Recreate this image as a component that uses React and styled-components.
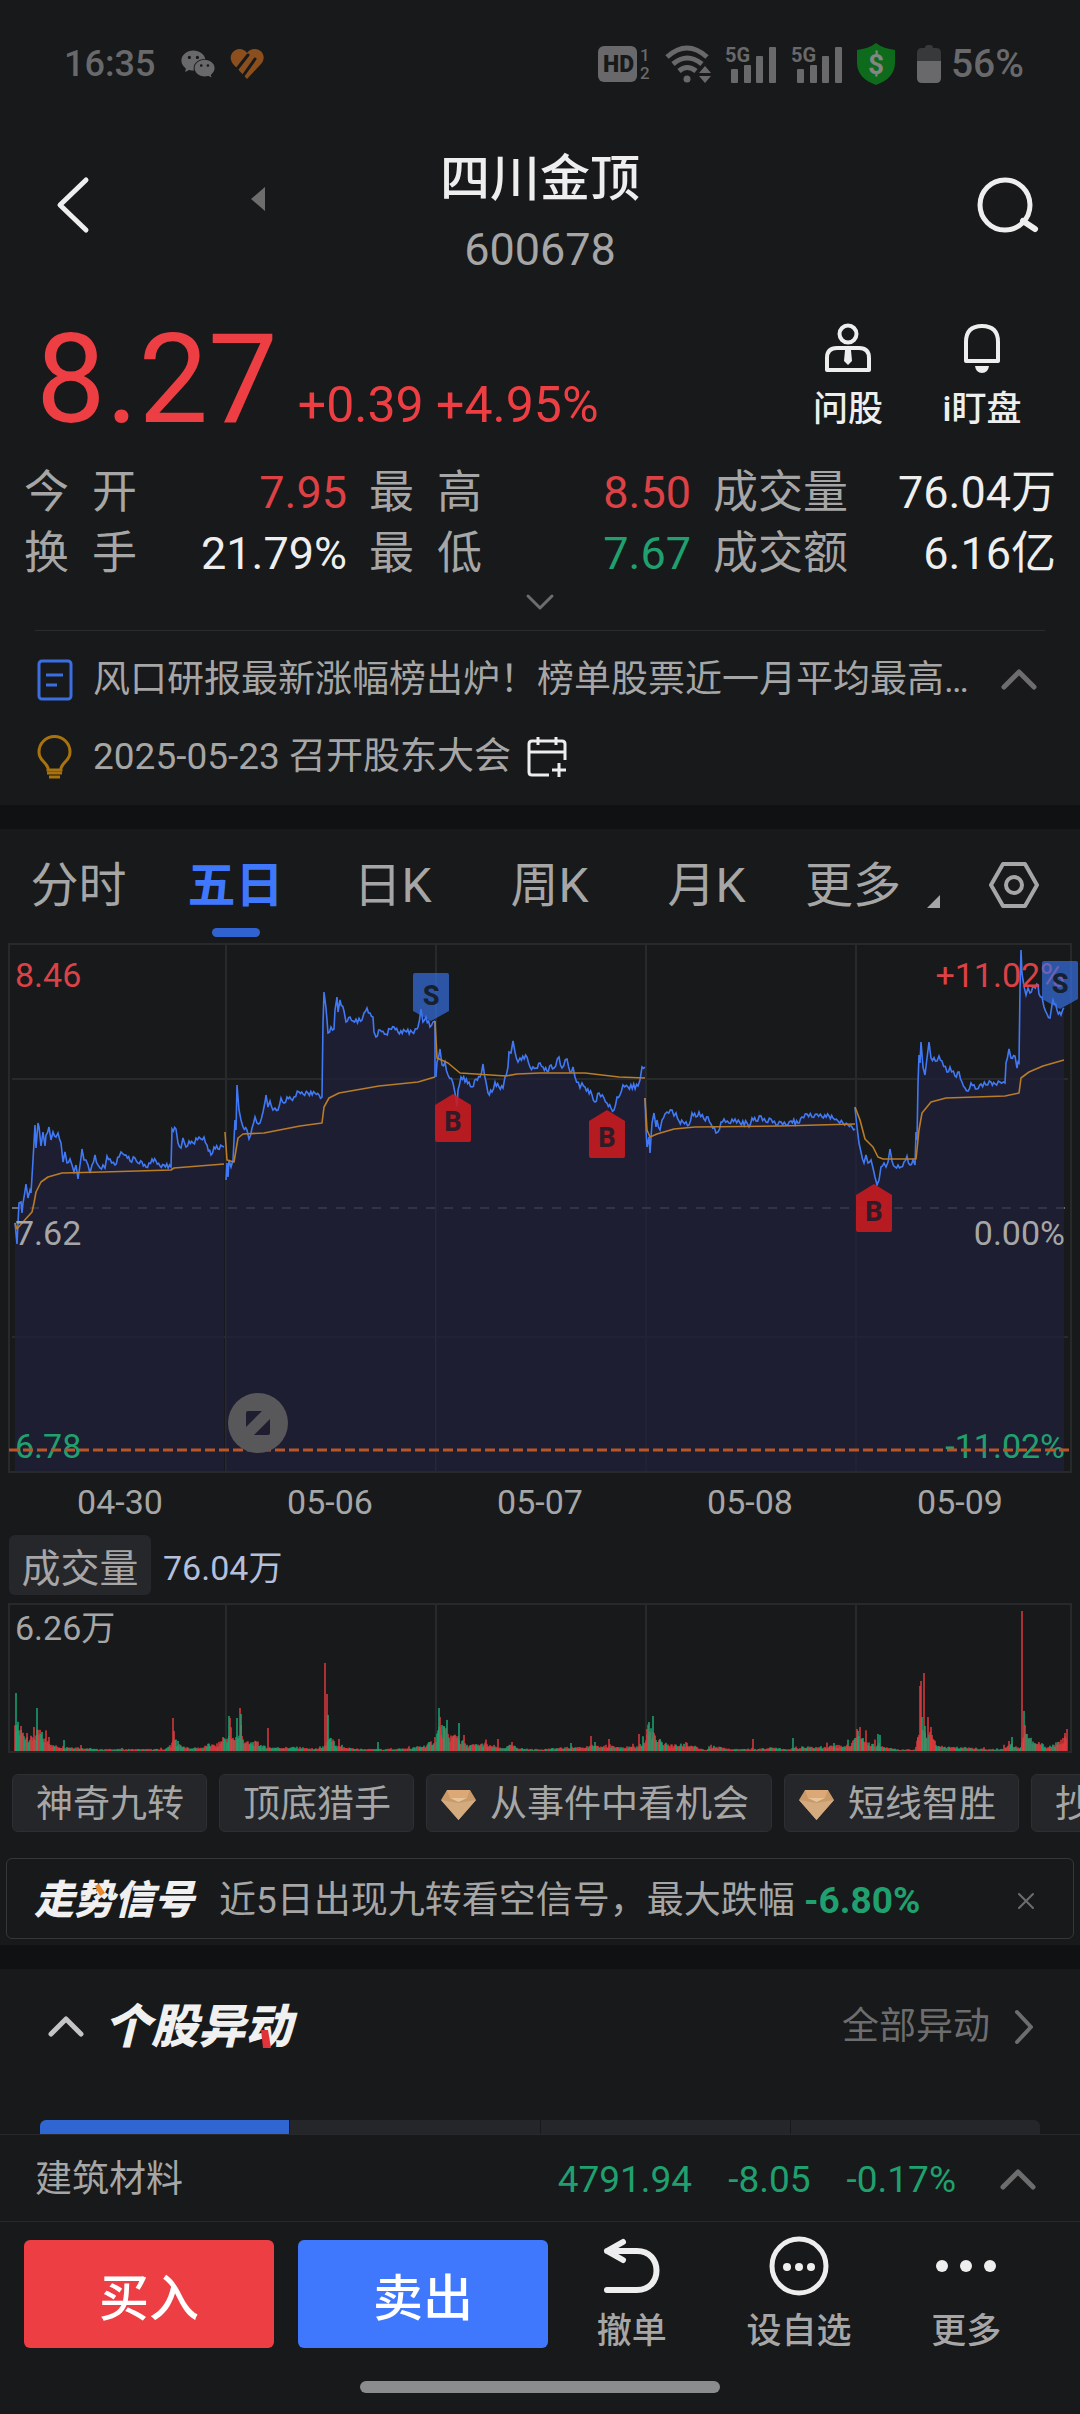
import React from 'react';
import styled, { createGlobalStyle } from 'styled-components';
import { AiFillWechat } from 'react-icons/ai';

const RED = '#ed3e43';
const GREEN = '#20a06f';
const BLUE = '#3f78fd';
const WHITE = '#eeeeee';
const GREY = '#a6a6a6';
const LINE = '#27292b';

const GlobalStyle = createGlobalStyle`
    * {
        box-sizing: border-box;
    }
    body {
        margin: 0;
        background: #17191a;
        color: ${GREY};
        font-family: Roboto, "Noto Sans CJK SC", sans-serif;
        overflow-x: hidden;
    }
    button {
        margin: 0;
        padding: 0;
        border: 0;
        background: none;
        color: inherit;
        font-family: inherit;
        cursor: pointer;
    }
    svg {
        display: block;
        flex-shrink: 0;
        overflow: visible;
    }
`

const Page = styled.main`
    display: flex;
    flex-direction: column;
    width: 100%;
`

const StatusBar = styled.header`
    display: flex;
    align-items: center;
    justify-content: space-between;
    height: 104px;
    padding: 24px 56px 0 64px;
    color: #69696b;
    font-size: 36px;
    font-weight: 500;
    line-height: 48px;
`

const StatusGroup = styled.div`
    display: flex;
    align-items: center;
    gap: ${props => props.$gap}px;
`

const Battery = styled.span`
    font-size: 39px;
`

const TopNav = styled.nav`
    display: grid;
    grid-template-columns: 1fr auto 1fr;
    align-items: start;
    padding: 44px 40px 0;
`

const NavSide = styled.div`
    display: flex;
    justify-content: ${props => (props.$end ? 'flex-end' : 'flex-start')};
    gap: 152px;
`

const NavButton = styled.button`
    display: flex;
    align-items: center;
    height: 114px;
    color: ${WHITE};
`

const PrevButton = styled(NavButton)`
    height: 102px;
    color: #6d6d6e;
`

const StockName = styled.h1`
    margin: 0 0 14px;
    color: ${WHITE};
    font-size: 50px;
    font-weight: 500;
    line-height: 62px;
    text-align: center;
`

const StockCode = styled.div`
    font-size: 45px;
    line-height: 52px;
    text-align: center;
`

const Quote = styled.section`
    display: flex;
    justify-content: space-between;
    margin-top: 40px;
    padding: 0 31px 0 36px;
`

const PriceLine = styled.div`
    display: flex;
    align-items: baseline;
    gap: 20px;
    height: 128px;
    color: ${RED};
    font-size: 50px;
    line-height: 56px;
    strong {
        font-size: 124px;
        font-weight: 400;
        line-height: 128px;
    }
`

const QuoteTools = styled.div`
    display: flex;
    padding-top: 8px;
`

const QuoteTool = styled.button`
    display: flex;
    flex-direction: column;
    align-items: center;
    gap: 14px;
    width: 134px;
    height: 108px;
    color: ${WHITE};
    font-size: 35px;
    font-weight: 500;
    line-height: 44px;
`

const Stats = styled.dl`
    display: grid;
    grid-template-columns: 323fr 322fr 343fr;
    column-gap: 22px;
    margin: 18px 24px 0;
    font-size: 45px;
    line-height: 61px;
`

const Stat = styled.div`
    display: flex;
    justify-content: space-between;
    white-space: nowrap;
    dd {
        margin: 0;
        color: ${props => props.$color};
    }
`

const ExpandButton = styled.button`
    display: flex;
    align-items: center;
    justify-content: center;
    height: 36px;
    color: #6d6d6e;
`

const News = styled.section`
    margin: 10px 35px 10px;
    padding-top: 10px;
    border-top: 1px solid #2a2c2e;
`

const NewsRow = styled.div`
    display: flex;
    align-items: center;
    height: 77px;
    font-size: 37px;
    line-height: 48px;
    a {
        margin: 0 16px 0 19px;
        color: inherit;
        text-decoration: none;
        white-space: nowrap;
    }
    button {
        display: flex;
        margin-left: ${props => (props.$push ? 'auto' : 0)};
        padding-right: ${props => (props.$push ? 8 : 0)}px;
        color: ${props => (props.$push ? '#6d6d6e' : WHITE)};
    }
`

const Gap = styled.div`
    height: 24px;
    background: #101112;
`

const Tabs = styled.nav`
    display: grid;
    grid-template-columns: repeat(6, 157fr) 138fr;
    height: 114px;
    padding-top: 27px;
`

const Tab = styled.button`
    display: flex;
    flex-direction: column;
    align-items: center;
    gap: 12px;
    color: ${props => (props.$active ? BLUE : GREY)};
    font-size: 48px;
    font-weight: ${props => (props.$active ? 700 : 400)};
    line-height: 60px;
    &::after {
        content: "";
        width: 48px;
        height: 9px;
        border-radius: 5px;
        background: ${props => (props.$active ? '#3063cf' : 'transparent')};
    }
`

const MoreTab = styled.button`
    display: flex;
    align-items: flex-end;
    justify-content: flex-end;
    gap: 26px;
    height: 60px;
    padding-right: 2px;
    font-size: 48px;
    line-height: 60px;
    white-space: nowrap;
    svg {
        margin-bottom: 8px;
    }
`

const GearButton = styled.button`
    display: flex;
    align-items: center;
    justify-content: center;
    height: 58px;
    padding-left: 6px;
`

const ChartBox = styled.section`
    position: relative;
    > svg {
        width: 100%;
        height: auto;
    }
`

const AxisLabel = styled.span`
    position: absolute;
    top: ${props => props.$top}px;
    ${props => props.$side}: 15px;
    color: ${props => props.$color};
    font-size: 34px;
    line-height: 40px;
`

const Dates = styled.div`
    display: grid;
    grid-template-columns: repeat(5, 1fr);
    padding: 0 15px;
    font-size: 34px;
    line-height: 58px;
    text-align: center;
`

const VolumeHead = styled.div`
    display: flex;
    align-items: center;
    gap: 12px;
    margin: 4px 9px 8px;
    color: #b4bfdc;
    font-size: 34px;
    button {
        width: 142px;
        height: 60px;
        border-radius: 6px;
        background: #26272b;
        color: ${GREY};
        font-size: 39px;
    }
`

const Chips = styled.div`
    display: flex;
    gap: 12px;
    margin-top: 21px;
    padding-left: 12px;
    overflow: hidden;
`

const Chip = styled.button`
    display: flex;
    flex-shrink: 0;
    align-items: center;
    gap: 14px;
    height: 58px;
    padding: 4px 22px 0 ${props => (props.$gem ? 14 : 23)}px;
    border: 1px solid #2d2f32;
    border-radius: 6px;
    background: #242629;
    font-size: 37px;
    line-height: 48px;
    white-space: nowrap;
`

const Signal = styled.section`
    display: flex;
    align-items: center;
    height: 81px;
    margin: 26px 6px 6px;
    padding: 4px 38px 0 27px;
    border: 1px solid #35373a;
    border-radius: 6px;
    font-size: 37px;
    line-height: 48px;
    white-space: nowrap;
    p {
        margin: 0 0 0 25px;
    }
    strong {
        color: ${GREEN};
        font-weight: 700;
    }
    button {
        display: flex;
        margin-left: auto;
        color: #6d6d6e;
    }
`

const Brand = styled.h2`
    position: relative;
    margin: 0;
    color: #f0f0f0;
    font-size: ${props => props.$size}px;
    font-style: italic;
    font-weight: 900;
    line-height: 56px;
    white-space: nowrap;
    svg {
        position: absolute;
        top: ${props => props.$markTop}px;
        left: ${props => props.$markLeft}px;
    }
`

const MovesHead = styled.section`
    display: flex;
    align-items: center;
    height: 114px;
    padding: 2px 46px 0 48px;
    button {
        display: flex;
        margin-right: 20px;
        color: #c4c4c4;
    }
    a {
        display: flex;
        align-items: center;
        gap: 24px;
        margin-left: auto;
        color: #6d6d6e;
        font-size: 37px;
        line-height: 48px;
        text-decoration: none;
    }
`

const Segments = styled.div`
    display: grid;
    grid-template-columns: repeat(4, 1fr);
    gap: 1px;
    height: 14px;
    margin: 37px 40px 0;
    border-radius: 6px 6px 0 0;
    overflow: hidden;
`

const Segment = styled.span`
    background: ${props => (props.$active ? '#3066d2' : '#25262a')};
`

const IndexBar = styled.section`
    display: flex;
    align-items: center;
    height: 88px;
    padding: 4px 44px 0 35px;
    border-top: 1px solid ${LINE};
    border-bottom: 1px solid ${LINE};
    font-size: 37px;
    line-height: 48px;
    span {
        margin-right: 36px;
        color: ${GREEN};
    }
    span:first-of-type {
        margin-left: auto;
    }
    button {
        display: flex;
        margin-left: 8px;
        color: #6d6d6e;
    }
`

const Actions = styled.footer`
    display: grid;
    grid-template-columns: 250fr 250fr 490fr;
    column-gap: 24px;
    align-items: center;
    padding: 14px 18px 0 24px;
`

const TradeButton = styled.button`
    height: 108px;
    border-radius: 6px;
    background: ${props => props.$color};
    color: #ffffff;
    font-size: 50px;
    font-weight: 500;
`

const ActionTools = styled.div`
    display: grid;
    grid-template-columns: repeat(3, 1fr);
    margin: 0 12px 0 -24px;
`

const ActionTool = styled.button`
    display: flex;
    flex-direction: column;
    align-items: center;
    gap: 16px;
    font-size: 35px;
    font-weight: 500;
    line-height: 40px;
    svg {
        color: ${WHITE};
    }
`

const HomeBar = styled.div`
    align-self: center;
    width: 33.333%;
    height: 12px;
    margin: 29px 0 21px;
    border-radius: 6px;
    background: #8b8c8d;
`

const Chevron = ({ width, height, d, weight = 4 }) => (
    <svg width={width} height={height} viewBox={`0 0 ${width} ${height}`} fill="none" stroke="currentColor" strokeWidth={weight} strokeLinecap="round" strokeLinejoin="round">
        <path d={d} />
    </svg>
)

const ChevronUp = () => <Chevron width={36} height={22} d="M3 18 L18 3 L33 18" weight={5} />

const SignalBars = () => (
    <svg width="52" height="38" viewBox="0 0 52 38" fill="currentColor">
        <text x="0" y="17" fontSize="20" fontWeight="700">5G</text>
        <rect x="6" y="24" width="7" height="14" rx="1" />
        <rect x="19" y="20" width="7" height="18" rx="1" />
        <rect x="31" y="11" width="7" height="27" rx="1" />
        <rect x="44" y="2" width="7" height="36" rx="1" />
    </svg>
)

const Status = () => (
    <StatusBar>
        <StatusGroup $gap={24}>
            <span>16:35</span>
            <StatusGroup $gap={13}>
                <AiFillWechat size={38} />
                <svg width="34" height="30" viewBox="0 0 34 30" fill="#8a4f1d">
                    <path d="M17 30 L3 15 C-3 7 4 0 9 0 C13 0 16 2 17 4 C18 2 21 0 25 0 C32 0 37 8 31 15 Z" />
                    <path d="M7 20 L18 6 M13 27 L25 10" stroke="#17191a" strokeWidth="3" strokeLinecap="round" />
                </svg>
            </StatusGroup>
        </StatusGroup>
        <StatusGroup $gap={14}>
            <svg width="53" height="38" viewBox="0 0 53 38" fill="currentColor">
                <rect y="1" width="39" height="36" rx="6" />
                <text x="5" y="27" fontSize="23" fontWeight="900" fill="#17191a">HD</text>
                <text x="42" y="16" fontSize="17">1</text>
                <text x="42" y="34" fontSize="17">2</text>
            </svg>
            <svg width="46" height="38" viewBox="0 0 46 38" fill="none" stroke="currentColor" strokeWidth="5">
                <path d="M2 12 Q22 -6 42 12" />
                <path d="M8 19 Q22 7 37 19" />
                <path d="M14 26 Q22 19 31 26" />
                <circle cx="22" cy="34" r="3.5" fill="currentColor" stroke="none" />
                <path d="M34 28 L40 21 L46 28 Z M34 31 L40 38 L46 31 Z" fill="currentColor" stroke="none" />
            </svg>
            <SignalBars />
            <SignalBars />
            <svg width="38" height="42" viewBox="0 0 38 42">
                <path d="M19 0 C24 4 31 6 38 7 V20 C38 31 30 38 19 42 C8 38 0 31 0 20 V7 C7 6 14 4 19 0 Z" fill="#0d6b1b" />
                <text x="19" y="31" textAnchor="middle" fontSize="28" fontWeight="700" fill="#848586">$</text>
            </svg>
            <StatusGroup $gap={10}>
                <svg width="32" height="38" viewBox="-8 0 32 38" fill="currentColor">
                    <path d="M0 16 V8 Q0 3 5 3 H8 Q8 0 11 0 H13 Q16 0 16 3 H19 Q24 3 24 8 V16 Z" fill="#38393b" />
                    <path d="M0 16 H24 V33 Q24 38 19 38 H5 Q0 38 0 33 Z" />
                </svg>
                <Battery>56%</Battery>
            </StatusGroup>
        </StatusGroup>
    </StatusBar>
)

// x / y in chart units, y grows downwards from the top border
const prices = [
    [15,280,17,301,18,280,19,260,21,259,22,270,23,260,26,241,28,255,30,247,31,250,33,217,35,182,36,205,38,180,39,184,41,203,43,189,45,203,46,192,49,184,51,197,53,189,56,194,58,190,61,200,62,209,63,219,65,209,67,220,70,216,72,222,74,229,76,222,78,236,80,222,81,215,82,206,84,217,86,217,88,222,90,230,92,222,95,212,98,222,100,225,103,222,105,225,107,213,110,216,115,222,119,214,121,209,123,211,126,212,130,218,135,215,138,220,142,219,146,224,149,220,152,216,156,218,160,223,164,222,171,224,172,186,176,186,178,200,181,205,183,195,186,204,189,198,193,200,199,194,201,196,204,194,207,202,211,212,214,204,218,206,222,203,224,204],
    [226,237,227,220,228,234,229,217,231,224,233,217,235,177,236,187,237,142,239,167,241,177,243,184,247,187,249,196,252,185,255,174,257,180,260,180,263,169,265,159,266,152,268,164,270,158,273,167,275,165,278,167,281,155,284,160,287,154,291,156,294,154,299,149,303,151,308,150,315,150,319,152,322,154,323,80,324,49,326,65,327,77,328,90,331,84,334,86,335,67,337,54,338,69,340,57,344,68,346,79,350,74,353,78,362,77,364,70,367,65,370,70,373,74,374,89,376,94,380,87,386,91,390,86,394,84,398,89,405,88,412,89,417,86,418,84,421,66,423,79,426,74,430,84,433,79,435,78],
    [436,134,437,119,440,106,442,122,445,119,448,132,453,140,455,150,457,163,458,147,461,134,469,139,472,144,476,136,480,134,483,121,486,139,488,150,492,149,495,139,499,144,503,145,505,134,508,124,509,109,511,110,513,98,515,109,518,119,520,115,527,114,530,124,536,125,540,120,543,124,547,128,551,122,554,125,559,114,562,125,567,116,570,129,573,124,575,134,580,145,582,140,585,144,592,152,595,159,599,150,604,155,607,160,611,165,614,167,617,154,620,152,623,142,628,144,638,143,640,137,642,124,645,124],
    [645,155,646,187,647,204,649,194,650,210,652,180,654,170,656,184,657,177,660,187,662,177,665,171,667,169,672,167,674,173,676,170,679,178,683,179,689,182,692,170,696,174,699,169,704,176,708,174,711,181,716,190,718,189,721,179,724,176,729,180,735,176,740,180,747,180,749,184,752,175,756,178,761,173,766,179,771,176,776,182,781,179,786,182,791,178,798,180,802,174,807,171,812,174,817,171,822,174,829,173,833,175,838,178,843,180,848,182,852,184,855,186],
    [855,165,857,184,859,200,861,209,864,220,866,212,868,220,871,217,873,225,875,234,877,242,879,237,881,224,884,220,886,224,888,219,890,206,892,218,895,224,901,224,904,219,907,213,910,222,913,217,915,222,916,189,917,197,918,140,919,112,920,120,921,99,923,124,925,132,927,115,929,99,931,115,937,118,939,113,942,118,947,129,950,124,955,133,959,129,962,139,965,145,968,148,971,140,977,146,981,141,986,142,991,139,995,141,1000,139,1005,140,1006,120,1009,106,1011,115,1015,113,1017,125,1018,119,1019,120,1020,47,1021,7,1022,30,1023,37,1026,52,1028,45,1030,50,1034,44,1038,42,1039,51,1042,54,1044,64,1047,71,1050,75,1052,62,1053,57,1057,67,1061,72,1063,66,1064,65],
]

const averages = [
    [15,280,17,286,23,279,32,269,34,260,36,249,41,239,48,234,62,230,103,229,171,227,174,225,224,221],
    [225,189,227,217,234,219,238,195,243,191,264,190,300,183,322,180,324,164,329,155,339,150,379,143,418,139,435,134],
    [435,78,437,115,448,120,460,130,506,133,517,131,540,130,585,130,619,134,645,135],
    [645,155,647,187,650,194,657,191,674,186,695,184,781,183,855,181],
    [855,164,860,177,865,196,873,204,878,214,883,216,916,216,919,187,922,170,931,159,946,155,1005,153,1019,150,1021,135,1029,129,1043,123,1064,117],
]

// x / height of the typical bar
const volumeBase = [14,26,20,22,30,14,39,22,43,14,48,12,52,6,60,5,80,4,95,2,165,2,172,10,180,5,190,3,202,4,207,7,215,6,222,13,226,16,232,14,236,17,240,18,243,13,248,8,252,10,258,8,265,4,285,4,300,4,310,2,322,3,328,13,332,12,335,5,342,4,360,2,385,2,410,3,418,5,425,6,433,12,438,26,443,24,447,18,452,16,456,20,460,10,466,6,476,7,484,8,490,5,500,3,511,6,516,4,525,2,540,2,570,4,594,5,612,5,635,4,645,12,650,25,655,12,662,9,668,6,683,7,693,6,697,3,705,1,712,5,720,4,730,2,755,2,776,4,785,2,803,4,815,4,833,6,842,6,850,7,857,20,862,13,867,11,873,7,881,6,895,2,914,1,917,14,924,24,930,18,937,5,955,4,966,4,985,2,1000,2,1010,9,1014,4,1020,4,1024,24,1029,14,1034,8,1039,9,1046,4,1050,6,1058,9,1062,13,1066,20]

const volumePeaks = [
    [15,58,0],[20,25,1],[26,18,1],[33,24,1],[36,43,0],[48,14,1],[63,11,0],[172,33,1],[173,20,1],[177,10,0],[228,35,0],[229,33,1],[236,33,0],[239,43,1],[240,37,0],
    [267,23,1],[324,88,1],[326,57,1],[327,36,0],[338,12,1],[377,9,0],[438,43,0],[439,34,1],[443,25,0],[458,28,0],[463,16,1],[497,12,1],[511,9,1],[570,8,0],[590,15,1],[594,9,0],[608,12,1],
    [638,17,1],[646,22,1],[648,29,0],[652,35,0],[653,18,1],[659,12,0],[752,12,1],[792,13,0],[833,8,0],[854,13,0],[856,22,1],[857,20,0],[862,13,0],[877,17,0],[879,16,0],
    [917,14,1],[919,65,1],[920,70,1],[921,34,0],[923,78,1],[924,25,0],[930,24,1],[1008,10,1],[1011,14,0],[1021,140,1],[1023,40,0],[1024,26,1],[1062,13,1],[1064,18,1],[1066,22,1],
]

const noise = n => {
    const v = Math.sin(n * 12.9898) * 43758.5453
    return v - Math.floor(v)
}

const toPath = values => {
    let d = `M${values[0]} ${values[1]}`
    for (let i = 2; i < values.length; i += 2) {
        d += ` L${values[i]} ${values[i + 1]}`
    }
    return d
}

// small ticks between two quotes that lie further apart
const withTicks = values => {
    const out = [values[0], values[1]]
    for (let i = 2; i < values.length; i += 2) {
        const [x0, y0, x1, y1] = values.slice(i - 2, i + 2)
        const steps = Math.floor((x1 - x0) / 1.3)
        for (let s = 1; s < steps; s++) {
            const swing = (s % 2 ? 1 : -1) * (0.6 + noise(x0 + s) * 2)
            out.push(x0 + ((x1 - x0) * s) / steps, y0 + ((y1 - y0) * s) / steps + swing)
        }
        out.push(x1, y1)
    }
    return out
}

const baseHeight = x => {
    let i = 2
    while (i < volumeBase.length - 2 && volumeBase[i] < x) i += 2
    const [x0, h0, x1, h1] = volumeBase.slice(i - 2, i + 2)
    return h0 + ((h1 - h0) * (x - x0)) / (x1 - x0)
}

const volumeBars = []
for (let x = 14; x < 1066; x++) {
    const burst = noise(x * 7) > 0.93 ? 1.6 : 1
    volumeBars.push([x, Math.max(1, baseHeight(x) * (0.5 + noise(x) * 0.6) * burst), noise(x * 3) > 0.45 ? 1 : 0])
}
volumeBars.push(...volumePeaks)

const dayLines = [226, 436, 646, 856]

const Marker = ({ x, y, side }) => (
    <g transform={`translate(${x} ${y})`}>
        <path
            d={side === 'B' ? 'M0 -48 L18 -37 V-2 Q18 0 16 0 H-16 Q-18 0 -18 -2 V-37 Z' : 'M0 0 L18 -10 V-46 Q18 -48 16 -48 H-16 Q-18 -48 -18 -46 V-10 Z'}
            fill={side === 'B' ? '#c91b21' : '#3873ea'}
            opacity={side === 'B' ? 0.9 : 0.67}
        />
        <text y={side === 'B' ? -11 : -16} textAnchor="middle" fontSize="27" fontWeight="800" fill={side === 'B' ? '#301c28' : '#16202f'}>{side}</text>
    </g>
)

const Overlay = styled.svg`
    position: absolute;
    top: 0;
    left: 0;
`

const PriceChart = () => (
    <ChartBox>
        <svg viewBox="0 0 1080 530">
            <g fill="none" stroke={LINE} strokeWidth="2">
                <rect x="9" y="1" width="1062" height="528" />
                {dayLines.map(x => <path key={x} d={`M${x} 1 V529`} />)}
                <path d="M12 136 H1068 M12 394 H1068" />
            </g>
            <path d="M12 265 H1065" stroke="#6b6d72" strokeWidth="2" strokeDasharray="9 9" />
            {prices.map(day => (
                <path key={day[0]} d={`${toPath(withTicks(day))} V528 H${day[0]} Z`} fill="#20203a" fillOpacity="0.75" />
            ))}
            {prices.map(day => (
                <path key={day[0]} d={toPath(withTicks(day))} fill="none" stroke="#4179f5" strokeWidth="1.6" />
            ))}
            <path d="M435 78 V134" stroke="#4179f5" strokeWidth="1.6" />
            {averages.map(day => (
                <path key={day[0]} d={toPath(day)} fill="none" stroke="#b97c28" strokeWidth="1.6" strokeLinejoin="round" />
            ))}
        </svg>
        <AxisLabel $side="left" $top={12} $color="#dc4146">8.46</AxisLabel>
        <AxisLabel $side="right" $top={12} $color="#dc4146">+11.02%</AxisLabel>
        <AxisLabel $side="left" $top={270} $color={GREY}>7.62</AxisLabel>
        <AxisLabel $side="right" $top={270} $color={GREY}>0.00%</AxisLabel>
        <AxisLabel $side="left" $top={483} $color={GREEN}>6.78</AxisLabel>
        <AxisLabel $side="right" $top={483} $color={GREEN}>-11.02%</AxisLabel>
        <Overlay viewBox="0 0 1080 530">
            <path d="M9 507 H1069" stroke="#b8562a" strokeWidth="3" strokeDasharray="10 4" />
            <Marker x={431} y={78} side="S" />
            <Marker x={1060} y={66} side="S" />
            <Marker x={453} y={199} side="B" />
            <Marker x={607} y={215} side="B" />
            <Marker x={874} y={289} side="B" />
            <circle cx="258" cy="480" r="30" fill="#58585b" />
            <path d="M246 470 Q246 468 248 468 H262 L246 484 Z M270 490 Q270 492 268 492 H254 L270 476 Z" fill="#1e1e30" />
        </Overlay>
    </ChartBox>
)

const VolumeChart = () => (
    <ChartBox>
        <svg viewBox="0 0 1080 150">
            <g fill="none" stroke={LINE} strokeWidth="2">
                <rect x="9" y="1" width="1062" height="148" />
                {dayLines.map(x => <path key={x} d={`M${x} 1 V149`} />)}
            </g>
            {volumeBars.map(([x, height, up], i) => (
                <rect key={i} x={x} y={148 - height} width="2" height={height} fill={up ? '#dd3a3e' : '#1ba471'} opacity="0.75" />
            ))}
        </svg>
        <AxisLabel $side="left" $top={5} $color={GREY}>6.26万</AxisLabel>
    </ChartBox>
)

const Gem = () => (
    <svg width="35" height="30" viewBox="0 0 35 30">
        <path d="M6 0 H29 L35 10 L17.5 30 L0 10 Z" fill="#c99a68" />
        <path d="M6 0 H29 L26 8 H9 Z" fill="#dba876" />
        <path d="M9 8 H26 L17.5 12 Z" fill="#e6c49b" />
        <path d="M0 10 L17.5 13 L35 10 L17.5 30 Z" fill="#d3ab7e" />
    </svg>
)

const stats = [
    { name: '今\u2002开', value: '7.95', color: '#dc4146' },
    { name: '最\u2002高', value: '8.50', color: '#dc4146' },
    { name: '成交量', value: '76.04万', color: WHITE },
    { name: '换\u2002手', value: '21.79%', color: WHITE },
    { name: '最\u2002低', value: '7.67', color: GREEN },
    { name: '成交额', value: '6.16亿', color: WHITE },
]

const chips = [
    { name: '神奇九转' },
    { name: '顶底猎手' },
    { name: '从事件中看机会', gem: true },
    { name: '短线智胜', gem: true },
    { name: '抄底信号' },
]

const App = () => {
    const statItems = stats.map(item => <Stat key={item.name} $color={item.color}>
        <dt>{item.name}</dt>
        <dd>{item.value}</dd>
    </Stat>)

    const chipItems = chips.map(item => <Chip key={item.name} $gem={item.gem}>
        {item.gem && <Gem />}
        {item.name}
    </Chip>)

    return (
        <Page>
            <GlobalStyle />
            <Status />
            <TopNav>
                <NavSide>
                    <NavButton aria-label="返回">
                        <Chevron width={58} height={60} d="M46 5 L20 30 L46 55" weight={5} />
                    </NavButton>
                    <PrevButton aria-label="上一只">
                        <svg width="16" height="24" viewBox="0 0 16 24" fill="currentColor"><path d="M15 0 V24 L1 12 Z" /></svg>
                    </PrevButton>
                </NavSide>
                <div>
                    <StockName>四川金顶</StockName>
                    <StockCode>600678</StockCode>
                </div>
                <NavSide $end>
                    <NavButton aria-label="搜索">
                        <svg width="62" height="56" viewBox="0 0 62 56" fill="none" stroke="currentColor" strokeWidth="5">
                            <circle cx="27" cy="28" r="25" />
                            <path d="M45 44 L57 52" strokeWidth="6" strokeLinecap="round" />
                        </svg>
                    </NavButton>
                </NavSide>
            </TopNav>
            <Quote>
                <PriceLine>
                    <strong>8.27</strong>
                    <span>+0.39 +4.95%</span>
                </PriceLine>
                <QuoteTools>
                    <QuoteTool>
                        <svg width="48" height="50" viewBox="0 0 48 50" fill="none" stroke="currentColor" strokeWidth="4">
                            <circle cx="24" cy="10" r="8.5" />
                            <path d="M3 46 V34 Q3 24 13 24 H35 Q45 24 45 34 V46 Z" strokeLinejoin="round" />
                            <path d="M21 26 H27 L28 37 L24 41 L20 37 Z" fill="currentColor" stroke="none" />
                        </svg>
                        问股
                    </QuoteTool>
                    <QuoteTool>
                        <svg width="48" height="50" viewBox="0 0 48 50" fill="none" stroke="currentColor" strokeWidth="4">
                            <path d="M8 37 V18 Q8 2 24 2 Q40 2 40 18 V37 Z" strokeLinejoin="round" />
                            <path d="M17 42 H31 Q30 49 24 49 Q18 49 17 42 Z" fill="currentColor" stroke="none" />
                        </svg>
                        i盯盘
                    </QuoteTool>
                </QuoteTools>
            </Quote>
            <Stats>{statItems}</Stats>
            <ExpandButton aria-label="展开">
                <Chevron width={30} height={18} d="M3 3 L15 15 L27 3" weight={3} />
            </ExpandButton>
            <News>
                <NewsRow $push>
                    <svg width="39" height="42" viewBox="0 0 39 42" fill="none" stroke="#3b6ee0" strokeWidth="3">
                        <rect x="4" y="2" width="32" height="38" rx="3" />
                        <path d="M11 16 H28 M11 26 H22" />
                    </svg>
                    <a href="#report">风口研报最新涨幅榜出炉！榜单股票近一月平均最高…</a>
                    <button aria-label="收起"><ChevronUp /></button>
                </NewsRow>
                <NewsRow>
                    <svg width="39" height="44" viewBox="0 0 39 44" fill="none" stroke="#a8730f" strokeWidth="3">
                        <path d="M13 35 V33 Q12 30 8 26 Q4 22 4 17 A15.5 15.5 0 0 1 35 17 Q35 22 31 26 Q27 30 26 33 V35 Z" />
                        <path d="M12 38 H27 M14 42 H25" />
                    </svg>
                    <a href="#meeting">2025-05-23 召开股东大会</a>
                    <button aria-label="加入日历">
                        <svg width="40" height="42" viewBox="0 0 40 42" fill="none" stroke="currentColor" strokeWidth="3">
                            <path d="M22 39 H5 Q2 39 2 36 V8 Q2 5 5 5 H35 Q38 5 38 8 V24" />
                            <path d="M2 16 H38 M11 1 V9 M29 1 V9 M25 34 H39 M32 27 V41" />
                        </svg>
                    </button>
                </NewsRow>
            </News>
            <Gap />
            <Tabs>
                <Tab>分时</Tab>
                <Tab $active>五日</Tab>
                <Tab>日K</Tab>
                <Tab>周K</Tab>
                <Tab>月K</Tab>
                <MoreTab>
                    更多
                    <svg width="13" height="13" viewBox="0 0 13 13" fill="currentColor"><path d="M13 0 V13 H0 Z" /></svg>
                </MoreTab>
                <GearButton aria-label="设置">
                    <svg width="52" height="48" viewBox="0 0 52 48" fill="none" stroke="currentColor" strokeWidth="4">
                        <path d="M15 3 H37 L49 24 L37 45 H15 L3 24 Z" strokeLinejoin="round" />
                        <circle cx="26" cy="24" r="8" />
                    </svg>
                </GearButton>
            </Tabs>
            <PriceChart />
            <Dates>
                <span>04-30</span>
                <span>05-06</span>
                <span>05-07</span>
                <span>05-08</span>
                <span>05-09</span>
            </Dates>
            <VolumeHead>
                <button>成交量</button>
                <span>76.04万</span>
            </VolumeHead>
            <VolumeChart />
            <Chips>{chipItems}</Chips>
            <Signal>
                <Brand $size={40} $markTop={11} $markLeft={60}>
                    走势信号
                    <svg width="12" height="12" viewBox="0 0 12 12"><path d="M1 2 L5 0 L11 9 L6 12 Z" fill="#e88a2a" /></svg>
                </Brand>
                <p>近5日出现九转看空信号，最大跌幅 <strong>-6.80%</strong></p>
                <button aria-label="关闭">
                    <Chevron width={18} height={18} d="M2 2 L16 16 M16 2 L2 16" weight={2} />
                </button>
            </Signal>
            <Gap />
            <MovesHead>
                <button aria-label="收起"><ChevronUp /></button>
                <Brand $size={47} $markTop={31} $markLeft={157}>
                    个股异动
                    <svg width="10" height="18" viewBox="0 0 10 18"><path d="M0 0 H7 L10 18 H2 Z" fill="#e0343a" /></svg>
                </Brand>
                <a href="#moves">
                    全部异动
                    <Chevron width={20} height={36} d="M3 3 L17 18 L3 33" />
                </a>
            </MovesHead>
            <Segments>
                <Segment $active />
                <Segment />
                <Segment />
                <Segment />
            </Segments>
            <IndexBar>
                建筑材料
                <span>4791.94</span>
                <span>-8.05</span>
                <span>-0.17%</span>
                <button aria-label="展开指数"><ChevronUp /></button>
            </IndexBar>
            <Actions>
                <TradeButton $color={RED}>买入</TradeButton>
                <TradeButton $color={BLUE}>卖出</TradeButton>
                <ActionTools>
                    <ActionTool>
                        <svg width="60" height="60" viewBox="0 0 60 60" fill="none" stroke="currentColor" strokeWidth="6" strokeLinecap="round" strokeLinejoin="round">
                            <path d="M21 6 L5 15 L21 24 M5 15 H35 C61 15 61 54 35 54 H5" />
                        </svg>
                        撤单
                    </ActionTool>
                    <ActionTool>
                        <svg width="60" height="60" viewBox="0 0 60 60" fill="currentColor">
                            <circle cx="30" cy="30" r="27" fill="none" stroke="currentColor" strokeWidth="5" />
                            <circle cx="18" cy="31" r="4" />
                            <circle cx="30" cy="31" r="4" />
                            <circle cx="42" cy="31" r="4" />
                        </svg>
                        设自选
                    </ActionTool>
                    <ActionTool>
                        <svg width="60" height="60" viewBox="0 0 60 60" fill="currentColor">
                            <circle cx="6" cy="30" r="6" />
                            <circle cx="30" cy="30" r="6" />
                            <circle cx="54" cy="30" r="6" />
                        </svg>
                        更多
                    </ActionTool>
                </ActionTools>
            </Actions>
            <HomeBar />
        </Page>
    );
}

export default App
